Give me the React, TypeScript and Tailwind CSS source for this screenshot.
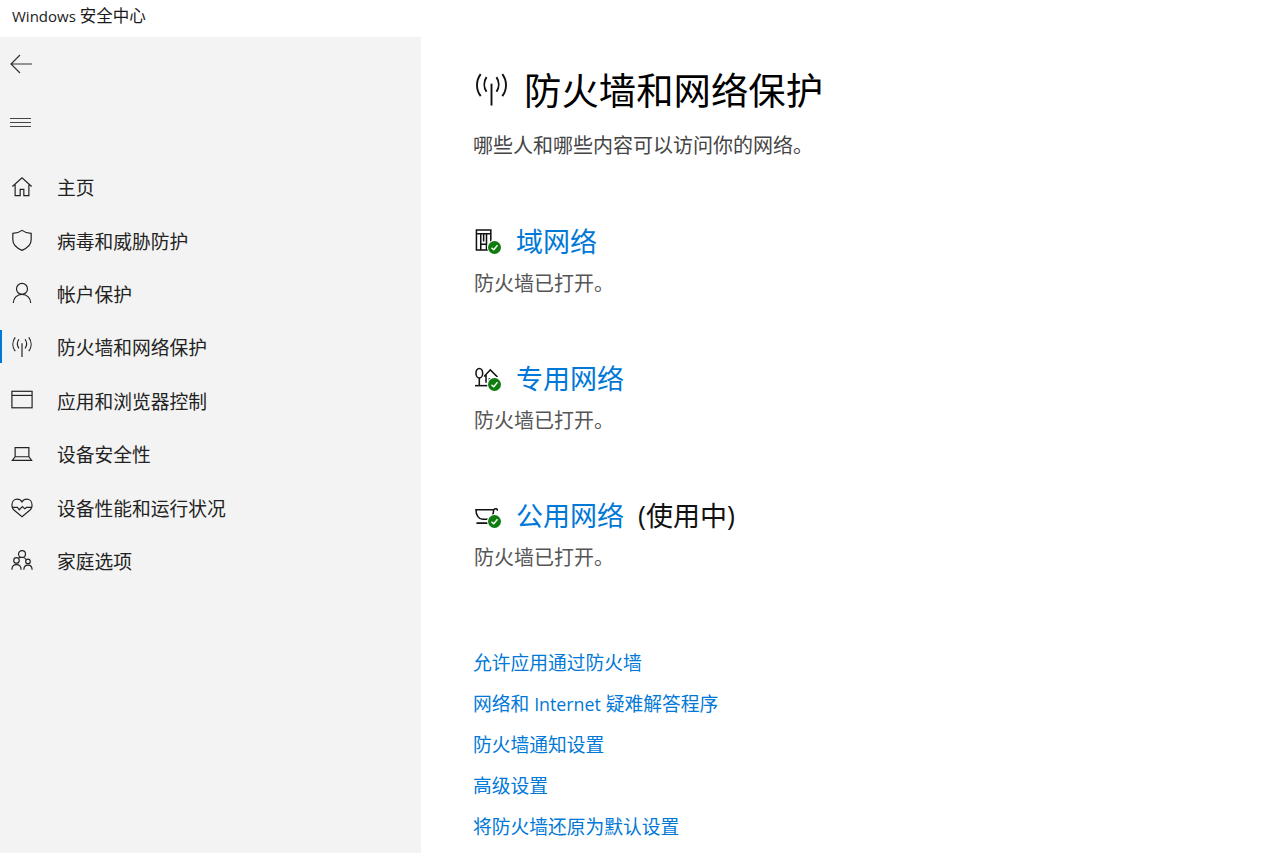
import React from 'react';

const FONT = "font-['Open_Sans','Noto_Sans_CJK_SC',sans-serif]";

const Svg = ({ children, className = 'w-6 h-6', sw = 1.3 }: { children: React.ReactNode; className?: string; sw?: number }) => (
  <svg viewBox="0 0 24 24" fill="none" stroke="currentColor" strokeWidth={sw} className={className}>
    {children}
  </svg>
);

// Antenna used both in the nav and next to the page title
const Antenna = () => (
  <>
    <path d="M12 8v15" />
    <path d="M8.600 3.500c-2 3-2 7 0 10" />
    <path d="M15.400 3.500c2 3 2 7 0 10" />
    <path d="M4.600 1.500c-3.400 4.500-3.400 10.500 0 15" />
    <path d="M19.400 1.500c3.400 4.500 3.400 10.500 0 15" />
  </>
);

const navItems: { label: string; active?: boolean; icon: React.ReactNode }[] = [
  {
    label: '主页',
    icon: <path d="M1.500 11.500 12 2l10.500 9.500M4.500 9.500V21.500h5.500v-7h4v7h5.500V9.500" />,
  },
  {
    label: '病毒和威胁防护',
    icon: <path d="M12 1.500c3 2.300 6 3.200 10 3.300v7c0 5.500-4 9-10 11.500C6 20.800 2 17.300 2 11.800v-7c4-.1 7-1 10-3.300Z" />,
  },
  {
    label: '帐户保护',
    icon: (
      <>
        <circle cx="12" cy="7.500" r="6" />
        <path d="M2.500 23c0-5.500 4-9.500 9.500-9.500s9.500 4 9.500 9.500" />
      </>
    ),
  },
  { label: '防火墙和网络保护', active: true, icon: <Antenna /> },
  {
    label: '应用和浏览器控制',
    icon: (
      <>
        <rect x="1" y="2.500" width="22" height="18" />
        <path d="M1 7h22" />
      </>
    ),
  },
  {
    label: '设备安全性',
    icon: <path d="M4.500 15V5h15v10M1.500 19h21l-3-4h-15l-3 4Z" />,
  },
  {
    label: '设备性能和运行状况',
    icon: (
      <path d="M3.500 15.500C1.500 13.800 1 12 1 10 1 5.800 3.800 3.500 6.800 3.500c2.200 0 4 1 5.200 3 1.200-2 3-3 5.200-3 3 0 5.800 2.300 5.800 6.500 0 2-.5 3.800-2.500 5.500L12 22.500l-8.500-7ZM1.500 12.500H7l2 2.500 3.500-3.500 2.500 2.500 2-1.500h5.500" />
    ),
  },
  {
    label: '家庭选项',
    icon: (
      <>
        <circle cx="12" cy="5.500" r="3.800" />
        <circle cx="6" cy="12.500" r="3" />
        <circle cx="18.500" cy="13.500" r="2.500" />
        <path d="M1 22.500c0-3.500 2-5.500 5-5.500s5 2 5 5.500M14 22.500c0-3 1.800-5 4.500-5s4.500 2 4.500 5M8.500 9.500c1-.5 2.200-.5 3.500-.5 2 0 3.500.8 4.500 2.500" />
      </>
    ),
  },
];

// Small green status badge overlapping the network icons
const Check = () => (
  <span className="absolute right-[-2px] bottom-[-1px] w-[13px] h-[13px] rounded-full bg-[#107c10] flex items-center justify-center ring-1 ring-white">
    <svg viewBox="0 0 12 12" fill="none" stroke="white" strokeWidth="1.800" className="w-[9px] h-[9px]">
      <path d="M2 6.500 5 9l5-6" />
    </svg>
  </span>
);

const networks: { name: string; suffix?: string; icon: React.ReactNode }[] = [
  {
    name: '域网络',
    icon: (
      <path d="M1.500 22V1h15v21h-15ZM1.500 5h15M6 5v17M12 5v17M9 5v8M6 16h6" />
    ),
  },
  {
    name: '专用网络',
    icon: (
      <>
        <path d="M0 20.500h16" />
        <ellipse cx="4.500" cy="7.500" rx="3.500" ry="5" />
        <path d="M4.500 12.500v8" />
        <path d="M9.500 11 16 4l7.500 7.500M11.500 9.500v8M21.500 9.500v1M15 17.500v-4h3" />
      </>
    ),
  },
  {
    name: '公用网络',
    suffix: '(使用中)',
    icon: (
      <path d="M1 7h18.500c0 6-3 10-7 10H8C4 17 1 13 1 7ZM19.500 7c2-2 4-1 4 1M1.500 21h14" />
    ),
  },
];

const links: React.ReactNode[] = [
  '允许应用通过防火墙',
  <>
    网络和 <span className="text-[17.800px]">Internet</span> 疑难解答程序
  </>,
  '防火墙通知设置',
  '高级设置',
  '将防火墙还原为默认设置',
];

export default function App() {
  return (
    <div className={`${FONT} w-[1269px] h-[853px] overflow-hidden bg-white flex flex-col`}>
      <div className="h-[37px] shrink-0 pl-3 flex items-center text-[16.500px] text-[#1a1a1a] pb-[5px] whitespace-pre">
        <span className="text-[15px]">Windows </span>安全中心
      </div>

      <div className="flex flex-1 min-h-0">
        <aside className="w-[421px] shrink-0 bg-[#f3f3f3] flex flex-col text-[#222]">
          <div className="pl-[10px] pt-[17px] h-[65px] text-[#333]">
            <svg viewBox="0 0 22 20" fill="none" stroke="currentColor" strokeWidth="1.200" className="w-[22px] h-[20px]">
              <path d="M22 10H1M10 1l-9 9 9 9" />
            </svg>
          </div>
          <div className="pl-[10px] pt-[16px] h-[59px] text-[#444]">
            <div className="w-[21px] flex flex-col gap-[3px]">
              <div className="h-px bg-current" />
              <div className="h-px bg-current" />
              <div className="h-px bg-current" />
            </div>
          </div>
          <nav className="flex flex-col">
            {navItems.map((item) => (
              <div key={item.label} className="relative h-[53.400px] flex items-center">
                {item.active && <span className="absolute left-0 top-[9px] w-[2px] h-[33px] bg-[#0078d7]" />}
                <span className="w-[57px] pl-[11px] shrink-0 flex mt-[-2px]">
                  <Svg className="w-[22px] h-[22px]">{item.icon}</Svg>
                </span>
                <span className="text-[18.750px] leading-none pt-[2px]">{item.label}</span>
              </div>
            ))}
          </nav>
        </aside>

        <main className="flex-1 pl-[52px] pt-[26px]">
          <div className="flex items-center h-[56px]">
            <span className="text-[#111] w-[51px] shrink-0 flex mt-[-4px] pl-px">
              <Svg className="w-[35px] h-[35px]">
                <Antenna />
              </Svg>
            </span>
            <h1 className="text-[37.400px] leading-none font-normal text-black">防火墙和网络保护</h1>
          </div>
          <p className="mt-[11px] text-[20px] leading-[32px] text-[#444]">哪些人和哪些内容可以访问你的网络。</p>

          <div className="mt-[57px] flex flex-col gap-[48px]">
            {networks.map((n) => (
              <section key={n.name} className="h-[89px]">
                <div className="flex items-center h-[44px]">
                  <span className="relative w-[24px] h-[24px] ml-[2px] mr-[17px] text-[#111] shrink-0">
                    <Svg className="w-[23px] h-[23px]" sw={1.600}>{n.icon}</Svg>
                    <Check />
                  </span>
                  <span className="text-[27px] leading-none text-[#0078d7]">{n.name}</span>
                  {n.suffix && <span className="ml-[14px] text-[27px] leading-none text-[#111]">{n.suffix}</span>}
                </div>
                <p className="pl-px pt-[3px] text-[20px] leading-[36px] text-[#555]">防火墙已打开。</p>
              </section>
            ))}
          </div>

          <div className="mt-[61px] flex flex-col">
            {links.map((l, i) => (
              <a key={i} className="h-[41px] flex items-center whitespace-pre text-[18.750px] leading-none text-[#0078d7]">
                {l}
              </a>
            ))}
          </div>
        </main>
      </div>
    </div>
  );
}
